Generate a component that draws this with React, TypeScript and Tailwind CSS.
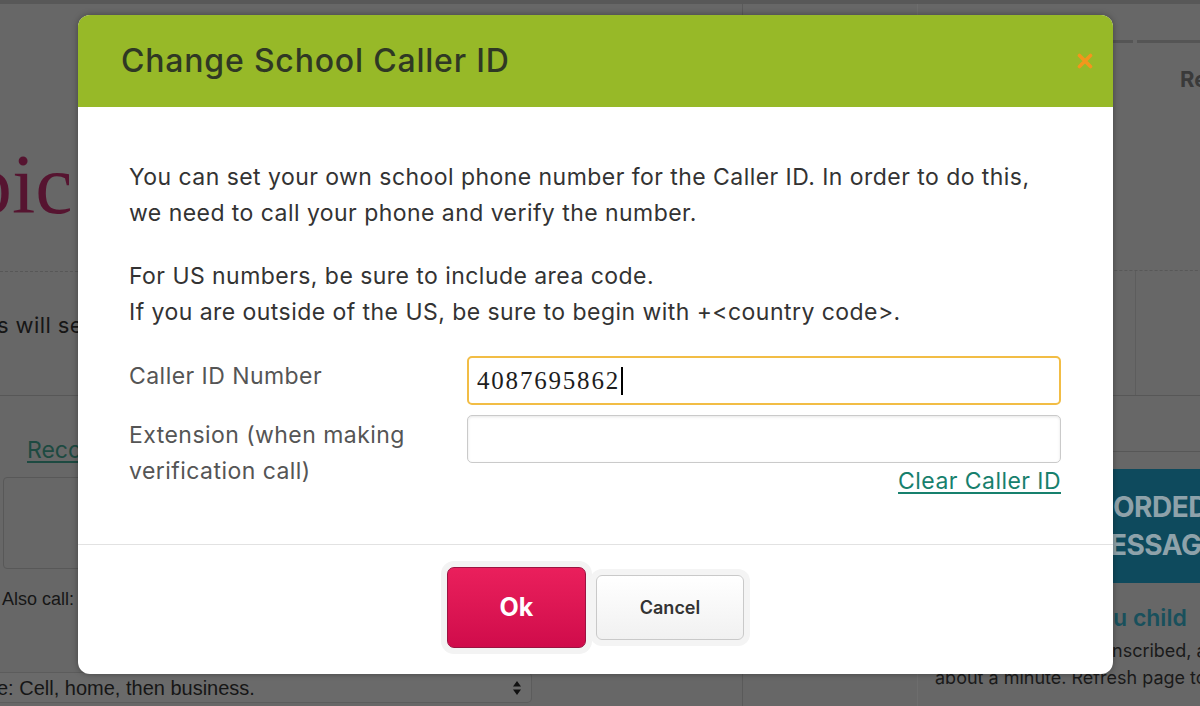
function CloseIcon() {
  return (
    <svg width="16" height="16" viewBox="0 0 16 16" className="text-[#f3961c]">
      <path d="M2.5 2.5L13.5 13.5M13.5 2.5L2.5 13.5" stroke="currentColor" strokeWidth="3.6" strokeLinecap="round" />
    </svg>
  );
}

function SelectArrows() {
  return (
    <svg width="10" height="16" viewBox="0 0 10 16" className="text-[#111]">
      <path d="M5 1L9 6.5H1Z M5 15L1 9.5H9Z" fill="currentColor" />
    </svg>
  );
}

function Backdrop() {
  return (
    <div className="flex h-full w-full flex-col">
      <div className="h-[4px] w-full shrink-0 bg-[#585858]" />
      <div className="flex flex-1">
        {/* main column */}
        <div className="relative flex w-[743px] shrink-0 flex-col border-r border-[#5a5a5a]">
          <div className="h-[139px] shrink-0" />
          <div className="-ml-[30px] font-['Liberation_Serif',serif] text-[84px] leading-[84px] text-[#561430]">pic</div>
          <div className="mt-[44px] border-t border-dashed border-[#575757]" />
          <div className="mt-[40px] -ml-[3px] text-[22px] leading-[26px] tracking-[0.4px] text-[#161616]">s will send</div>
          <div className="mt-[57px] border-t border-[#575757]" />
          <div className="mt-[40px] pl-[27px] text-[23px] leading-[28px] text-[#1d4a41] underline underline-offset-[3px]">Recorded</div>
          <div className="mt-[13px] ml-[3px] h-[92px] w-[300px] rounded-[4px] border border-[#585858]" />
          <div className="mt-[19px] pl-[2px] font-['Liberation_Sans',sans-serif] text-[18px] leading-[22px] text-[#161616]">Also call:</div>
          <div className="flex-1" />
          <div className="mb-[3px] flex h-[31px] w-[532px] items-center justify-between rounded-r-[5px] border border-l-0 border-[#5c5c5c] bg-[#6a6a6a] pr-[9px]">
            <span className="-ml-[3px] font-['Liberation_Sans',sans-serif] text-[20px] text-[#161616]">e: Cell, home, then business.</span>
            <SelectArrows />
          </div>
        </div>
        <div className="w-[175px] shrink-0 border-r border-[#6d6d6d]" />
        {/* sidebar */}
        <div className="flex flex-1 flex-col">
          <div className="mt-[36px] flex gap-[4px] pl-[195px]">
            <div className="h-[3px] w-[20px] bg-[#555]" />
            <div className="h-[3px] flex-1 bg-[#555]" />
          </div>
          <div className="mt-[23px] pl-[262px] text-[22px] font-bold leading-[26px] text-[#3a3a3a]">Re</div>
          <div className="mt-[178px] border-t border-dashed border-[#585858]" />
          <div className="ml-[217px] h-[124px] border-l border-[#5d5d5d]" />
          <div className="border-t border-[#575757]" />
          <div className="h-[55px]" />
          <div className="border-t border-[#575757]" />
          <div className="mt-[17px] flex h-[114px] flex-col justify-center bg-[#0e4a5d] text-[28px] font-bold leading-[38px] tracking-[-0.5px] text-[#8ea2aa]">
            <span className="pl-[195px]">ORDED</span>
            <span className="pl-[192px]">ESSAGE</span>
          </div>
          <div className="mt-[19px] pl-[195px] text-[23px] font-semibold leading-[32px] text-[#19505c]">u child</div>
          <div className="mt-[4px] pl-[194px] text-[18px] leading-[26px] text-[#1a1a1a] whitespace-nowrap">nscribed, a</div>
          <div className="mt-[2px] pl-[17px] text-[18px] leading-[24px] text-[#1a1a1a] whitespace-nowrap">about a minute. Refresh page to</div>
        </div>
      </div>
    </div>
  );
}

export default function App() {
  return (
    <div className="relative h-[706px] w-[1200px] overflow-hidden bg-[#676767] font-['Inter',sans-serif]">
      <Backdrop />

      <div className="absolute left-[78px] top-[15px] flex h-[659px] w-[1035px] flex-col overflow-hidden rounded-[12px] bg-white shadow-[0_0_6px_rgba(0,0,0,0.35)]">
        <div className="flex h-[92px] shrink-0 items-center justify-between bg-[#97b928] pl-[43px] pr-[20px]">
          <h2 className="text-[32px] font-medium tracking-[0.8px] text-[#2f3824]">Change School Caller ID</h2>
          <CloseIcon />
        </div>

        <div className="flex flex-col px-[51px] pt-[52px] text-[23px] leading-[36px] tracking-[0.45px]">
          <p className="text-[#333]">
            You can set your own school phone number for the Caller ID. In order to do this,
            <br />
            we need to call your phone and verify the number.
          </p>
          <p className="mt-[27px] text-[#333]">
            For US numbers, be sure to include area code.
            <br />
            If you are outside of the US, be sure to begin with +&lt;country code&gt;.
          </p>

          <div className="mt-[26px] grid grid-cols-[338px_594px] gap-y-[10px]">
            <label className="pt-[2px] text-[#555]">Caller ID Number</label>
            <div className="flex h-[49px] items-center rounded-[5px] border-2 border-[#f2bd45] px-[8px]">
              <span className="font-['Liberation_Serif',serif] text-[25px] tracking-[1.8px] text-[#1d1d1d]">4087695862</span>
              <span className="ml-[1px] h-[28px] w-[1.5px] bg-black" />
            </div>

            <label className="pt-[2px] text-[#555]">
              Extension (when making
              <br />
              verification call)
            </label>
            <div className="flex flex-col items-end">
              <div className="h-[48px] w-full rounded-[5px] border border-[#cacaca] shadow-[inset_0_1px_3px_rgba(0,0,0,0.1)]" />
              <a className="mt-[4px] leading-[28px] text-[#17806d] underline underline-offset-[3px]">Clear Caller ID</a>
            </div>
          </div>
        </div>

        <div className="mt-auto flex h-[130px] shrink-0 items-center justify-center gap-[10px] border-t border-[#e2e2e2] pb-[4px]">
          <button className="h-[81px] w-[139px] rounded-[7px] border border-[#9b1341] bg-gradient-to-b from-[#ea1f5c] to-[#d00b4b] text-[25px] font-bold text-white shadow-[0_0_0_6px_#f3f3f3]">
            Ok
          </button>
          <button className="h-[65px] w-[148px] rounded-[6px] border border-[#c9c9c9] bg-gradient-to-b from-white to-[#f1f1f1] text-[18px] font-semibold text-[#333] shadow-[0_0_0_6px_#f4f4f4]">
            Cancel
          </button>
        </div>
      </div>
    </div>
  );
}
